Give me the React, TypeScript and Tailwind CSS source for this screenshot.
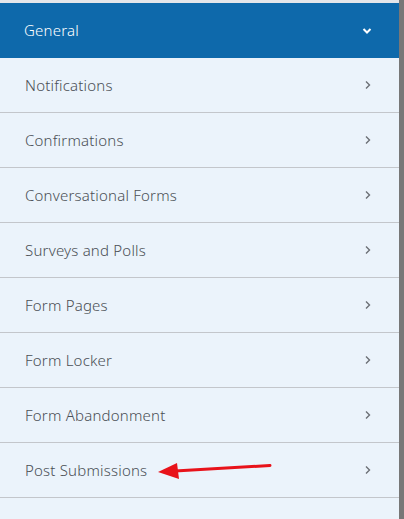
import React from "react";

const items = [
  "Notifications",
  "Confirmations",
  "Conversational Forms",
  "Surveys and Polls",
  "Form Pages",
  "Form Locker",
  "Form Abandonment",
  "Post Submissions",
];

function ChevronRight() {
  return (
    <svg width="8" height="10" viewBox="0 0 8 10" fill="none">
      <path d="M2 1.5 L5.5 5 L2 8.5" stroke="#6b6f75" strokeWidth="1.4" />
    </svg>
  );
}

function ChevronDown() {
  return (
    <svg width="10" height="8" viewBox="0 0 10 8" fill="none">
      <path d="M1.5 2 L5 5.5 L8.5 2" stroke="#fff" strokeWidth="2" />
    </svg>
  );
}

export default function App() {
  return (
    <div
      className="flex h-[519px] w-[404px] overflow-hidden bg-[#ebf3fb]"
      style={{ fontFamily: '"Noto Sans", "Open Sans", sans-serif' }}
    >
      <div className="flex w-[399px] flex-col">
        <div className="h-[3px] bg-[#e4e6ea]" />
        <div className="flex h-[55px] items-center justify-between bg-[#0e69ab] pl-[24px] pr-[27px] text-[15px] font-[350] tracking-[0.2px] text-white">
          <span>General</span>
          <ChevronDown />
        </div>
        {items.map((t) => (
          <div
            key={t}
            className="relative flex h-[55px] items-center justify-between border-b border-[#c3c6cb] bg-[#ebf3fb] pl-[25px] pr-[27px] text-[15px] font-[350] tracking-[0.2px] text-[#4a4f55]"
          >
            <span>{t}</span>
            <ChevronRight />
            {t === "Post Submissions" && (
              <svg
                className="absolute left-[155px] top-[15px]"
                width="120"
                height="24"
                viewBox="0 0 120 24"
              >
                <path d="M20 13 L115 7.5" stroke="#e8121a" strokeWidth="3" strokeLinecap="round" />
                <path d="M3 14 L22 5 L24 21 Z" fill="#e8121a" />
              </svg>
            )}
          </div>
        ))}
        <div className="flex-1 bg-[#ebf3fb]" />
      </div>
      <div className="w-[5px] bg-[#777]" />
    </div>
  );
}
